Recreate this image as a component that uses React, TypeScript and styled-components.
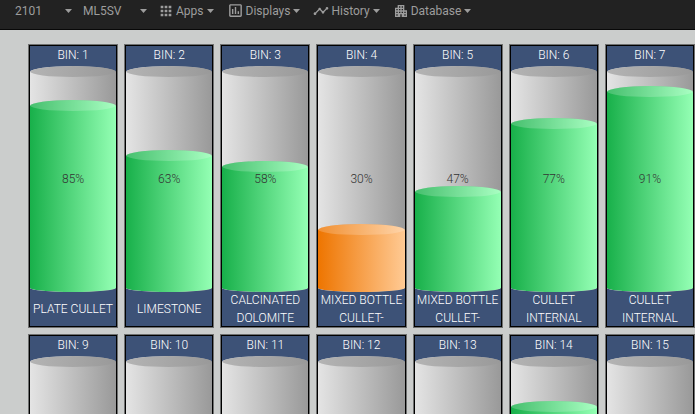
import React from 'react';
import styled, { createGlobalStyle } from 'styled-components';
import { MdApartment, MdApps, MdOutlineAssessment, MdTimeline } from 'react-icons/md';

const GlobalStyle = createGlobalStyle`
  * { box-sizing: border-box; }
  html, body, #root { height: 100%; }
  body {
    margin: 0;
    overflow: hidden;
    background: #cbcdcc;
    font-family: Roboto, 'Liberation Sans', sans-serif;
    font-size: 12px;
  }
`;

const NavBar = styled.nav`
  display: flex;
  align-items: flex-start;
  height: 30px;
  padding-left: 15px;
  background: #222;
  border-bottom: 1px solid #080808;
  color: #9d9d9d;
`;

const Picker = styled.label<{ $width: number }>`
  display: grid;
  grid-template-columns: 1fr 8px;
  align-items: center;
  width: ${(p) => p.$width}px;
  height: 22px;

  & > * { grid-row: 1; }
  svg { grid-column: 2; pointer-events: none; }
`;

const Pickers = styled.div`
  display: flex;
  gap: 10px;
  margin-right: 10px;
`;

const PickerSelect = styled.select`
  grid-column: 1 / 3;
  appearance: none;
  width: 100%;
  height: 22px;
  padding: 0;
  border: 0;
  background: transparent;
  color: inherit;
  font: inherit;
  line-height: 22px;
`;

const Menus = styled.div`
  display: flex;
  gap: 13px;
`;

const MenuButton = styled.button`
  display: flex;
  align-items: center;
  gap: 2px;
  height: 21px;
  padding: 0;
  border: 0;
  background: none;
  color: inherit;
  font: inherit;
  white-space: nowrap;

  svg { flex: none; }
  svg:last-child { margin-left: 1px; }
`;

const Bins = styled.main`
  display: grid;
  grid-template-columns: repeat(7, minmax(0, 1fr));
  gap: 8px;
  padding: 15px 1px 15px 29px;
`;

const BinCard = styled.section`
  display: flex;
  flex-direction: column;
  border: 1px solid #000;
  box-shadow: 0 0 0 1px rgba(0, 0, 0, 0.45);
  background: #3d5277;
  color: #fff;
  font-weight: 300;
  text-align: center;
`;

const BinTitle = styled.h2`
  margin: 0;
  height: 20px;
  font-size: 12px;
  font-weight: inherit;
  line-height: 19px;
`;

const BinName = styled.p`
  display: flex;
  align-items: center;
  justify-content: center;
  margin: 0;
  height: 34px;
  line-height: 18px;
`;

const Cylinder = styled.div`
  display: grid;
  height: 226px;
  border-radius: 50% / 6px 6px 4px 4px;
  overflow: hidden;
  background: linear-gradient(to right, #e4e4e4, #999);

  & > * { grid-area: 1 / 1; }
`;

const Rim = styled.div`
  height: 11px;
  border-radius: 50%;
  background: linear-gradient(to right, #b4b4b4, #999);
`;

const Fill = styled.div<{ $low: boolean }>`
  align-self: end;
  border-radius: 50% / 6px 6px 4px 4px;
  overflow: hidden;
  background: ${(p) =>
    p.$low
      ? 'linear-gradient(to right, #ee7500, #ffca94)'
      : 'linear-gradient(to right, #18b04a, #94ffb4)'};
`;

const Surface = styled.div`
  height: 11px;
  border-radius: 50%;
  background: rgba(255, 255, 255, 0.2);
`;

const Percent = styled.span`
  align-self: center;
  color: #333;
`;

type Bin = { id: number; level: number; name: string };

const bins: Bin[] = [
  { id: 1, level: 85, name: 'PLATE CULLET' },
  { id: 2, level: 63, name: 'LIMESTONE' },
  { id: 3, level: 58, name: 'CALCINATED DOLOMITE' },
  { id: 4, level: 30, name: 'MIXED BOTTLE CULLET-' },
  { id: 5, level: 47, name: 'MIXED BOTTLE CULLET-' },
  { id: 6, level: 77, name: 'CULLET INTERNAL' },
  { id: 7, level: 91, name: 'CULLET INTERNAL' },
  { id: 9, level: 0, name: '' },
  { id: 10, level: 0, name: '' },
  { id: 11, level: 0, name: '' },
  { id: 12, level: 0, name: '' },
  { id: 13, level: 0, name: '' },
  { id: 14, level: 80, name: '' },
  { id: 15, level: 0, name: '' },
];

const Caret = () => (
  <svg width="7" height="4" viewBox="0 0 7 4" aria-hidden="true">
    <path d="M0 0h7L3.5 4z" fill="currentColor" />
  </svg>
);

const menus = [
  { label: 'Apps', icon: <MdApps size={16} /> },
  { label: 'Displays', icon: <MdOutlineAssessment size={17} /> },
  { label: 'History', icon: <MdTimeline size={16} /> },
  { label: 'Database', icon: <MdApartment size={16} /> },
];

export default function App() {
  return (
    <>
      <GlobalStyle />
      <NavBar>
        <Pickers>
          <Picker $width={58}>
            <PickerSelect aria-label="Site">
              <option>2101</option>
            </PickerSelect>
            <Caret />
          </Picker>
          <Picker $width={65}>
            <PickerSelect aria-label="Line">
              <option>ML5SV</option>
            </PickerSelect>
            <Caret />
          </Picker>
        </Pickers>
        <Menus>
          {menus.map((m) => (
            <MenuButton key={m.label} type="button">
              {m.icon}
              {m.label}
              <Caret />
            </MenuButton>
          ))}
        </Menus>
      </NavBar>
      <Bins>
        {bins.map((b) => (
          <BinCard key={b.id}>
            <BinTitle>BIN: {b.id}</BinTitle>
            <Cylinder>
              <Rim />
              {b.level > 0 && (
                <Fill $low={b.level < 40} style={{ height: `${b.level}%` }}>
                  <Surface />
                </Fill>
              )}
              <Percent>{b.level}%</Percent>
            </Cylinder>
            <BinName>{b.name}</BinName>
          </BinCard>
        ))}
      </Bins>
    </>
  );
}
